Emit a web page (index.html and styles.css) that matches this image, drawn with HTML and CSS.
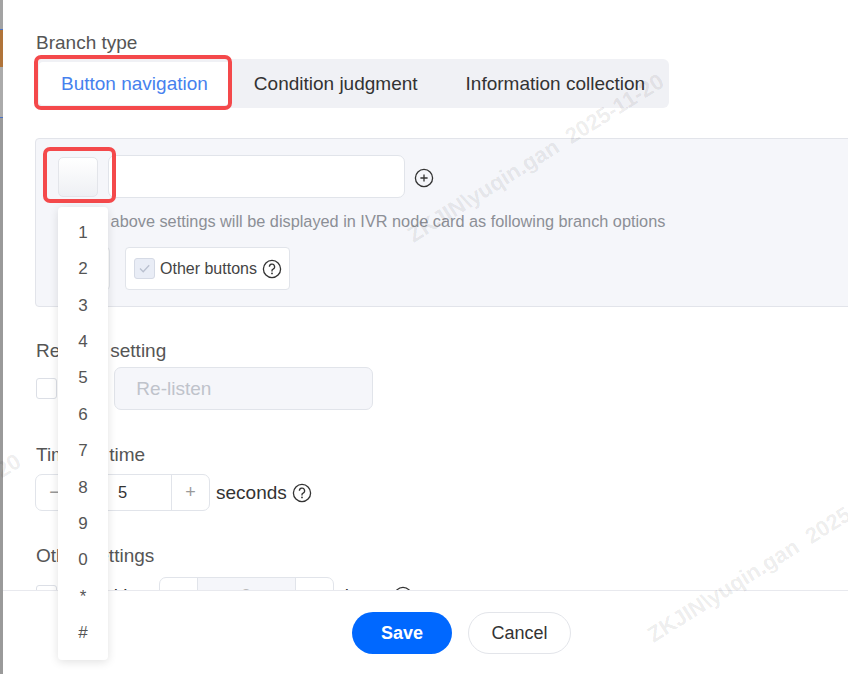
FILE: index.html
```html
<!DOCTYPE html>
<html>
<head>
<meta charset="utf-8">
<link rel="stylesheet" href="styles.css">
</head>
<body>
<div class="page">
  <div class="strip"></div>
  <div class="modal">
    <div class="content">
      <div class="label">Branch type</div>
      <div class="segmented">
        <div class="tab active">Button navigation</div>
        <div class="tab">Condition judgment</div>
        <div class="tab">Information collection</div>
      </div>

      <div class="panel">
        <div class="key-row">
          <div class="key-box"></div>
          <div class="text-input"></div>
          <svg class="icon-plus" width="20" height="20" viewBox="0 0 20 20"><circle cx="10" cy="10" r="8.6" fill="none" stroke="#333" stroke-width="1.3"/><path d="M10 6.4v7.2M6.4 10h7.2" stroke="#333" stroke-width="1.3"/></svg>
        </div>
        <div class="hint">The above settings will be displayed in IVR node card as following branch options</div>
        <div class="chip-row">
          <div class="chip chip-hidden"></div>
          <div class="chip">
            <span class="checkbox checked-disabled"><svg width="21" height="21" viewBox="0 0 21 21"><path d="M6 10.5l3.2 3.2 6-6.4" fill="none" stroke="#b9c0cf" stroke-width="1.3"/></svg></span>
            <span class="chip-text">Other buttons</span>
            <svg class="icon-help" width="20" height="20" viewBox="0 0 20 20"><circle cx="10" cy="10" r="8.6" fill="none" stroke="#333" stroke-width="1.3"/><path d="M7.4 7.8a2.6 2.6 0 1 1 3.7 2.3c-.7.3-1.1.8-1.1 1.5v.8" fill="none" stroke="#333" stroke-width="1.3"/><circle cx="10" cy="14.4" r=".9" fill="#333"/></svg>
          </div>
        </div>
      </div>

      <div class="label section">Re-<span class="tight">listen</span> setting</div>
      <div class="row relisten-row">
        <span class="checkbox"></span>
        <span class="row-text">On</span>
        <div class="disabled-input">Re-listen</div>
      </div>

      <div class="label section">Timeout time</div>
      <div class="row timeout-row">
        <div class="stepper">
          <span class="step">−</span>
          <span class="step-value">5</span>
          <span class="step">+</span>
        </div>
        <span class="row-text after">seconds</span>
        <svg class="icon-help" width="20" height="20" viewBox="0 0 20 20"><circle cx="10" cy="10" r="8.6" fill="none" stroke="#333" stroke-width="1.3"/><path d="M7.4 7.8a2.6 2.6 0 1 1 3.7 2.3c-.7.3-1.1.8-1.1 1.5v.8" fill="none" stroke="#333" stroke-width="1.3"/><circle cx="10" cy="14.4" r=".9" fill="#333"/></svg>
      </div>

      <div class="label section">Other settings</div>
      <div class="row other-row">
        <span class="checkbox"></span>
        <span class="row-text">Repetition</span>
        <div class="stepper stepper-disabled">
          <span class="step">−</span>
          <span class="step-value">3</span>
          <span class="step">+</span>
        </div>
        <span class="row-text after">times</span>
        <svg class="icon-help" width="20" height="20" viewBox="0 0 20 20"><circle cx="10" cy="10" r="8.6" fill="none" stroke="#333" stroke-width="1.3"/><path d="M7.4 7.8a2.6 2.6 0 1 1 3.7 2.3c-.7.3-1.1.8-1.1 1.5v.8" fill="none" stroke="#333" stroke-width="1.3"/><circle cx="10" cy="14.4" r=".9" fill="#333"/></svg>
      </div>
    </div>

    <div class="footer">
      <button class="btn btn-primary">Save</button>
      <button class="btn btn-default">Cancel</button>
    </div>

    <div class="watermark wm1">ZKJIN\yuqin.gan&nbsp;&nbsp;2025-11-20</div>
    <div class="watermark wm2">ZKJIN\yuqin.gan&nbsp;&nbsp;2025-11-20</div>
    <div class="watermark wm3">ZKJIN\yuqin.gan&nbsp;&nbsp;2025-11-20</div>

    <div class="annot annot-tab"></div>
    <div class="annot annot-key"></div>

    <div class="dropdown">
      <div class="dd-item">1</div>
      <div class="dd-item">2</div>
      <div class="dd-item">3</div>
      <div class="dd-item">4</div>
      <div class="dd-item">5</div>
      <div class="dd-item">6</div>
      <div class="dd-item">7</div>
      <div class="dd-item">8</div>
      <div class="dd-item">9</div>
      <div class="dd-item">0</div>
      <div class="dd-item">*</div>
      <div class="dd-item">#</div>
    </div>
  </div>
</div>
</body>
</html>
```

FILE: styles.css
```css
html, body {
  margin: 0;
  padding: 0;
  background: #fff;
  overflow: hidden;
}
body {
  font-family: "Liberation Sans", Arial, sans-serif;
  color: #333;
}
.page {
  display: flex;
  width: 848px;
  height: 674px;
  overflow: hidden;
}
.strip {
  flex: none;
  width: 3px;
  height: 674px;
  background: linear-gradient(to bottom,
    #a3a3a3 0, #a3a3a3 29px,
    #4a72c4 29px, #4a72c4 30px,
    #b0743a 30px, #b0743a 67px,
    #ababab 67px, #ababab 117px,
    #4a72c4 117px, #4a72c4 118px,
    #9a9a9a 118px, #9a9a9a 100%);
}
.modal {
  flex: none;
  width: 917px;
  height: 674px;
  display: flex;
  flex-direction: column;
  background: #fff;
  position: relative;
}
.content {
  height: 590px;
  box-sizing: border-box;
  padding: 31px 33px 0 33px;
  overflow: hidden;
  flex: none;
}
.label {
  font-size: 19px;
  line-height: 24px;
  color: #555;
}
.label.section {
  margin-top: 32px;
}
.tight {
  letter-spacing: -1px;
}
.segmented {
  margin-top: 4px;
  display: flex;
  width: fit-content;
  background: #f0f1f5;
  border-radius: 6px;
  padding: 3px;
}
.tab {
  height: 43px;
  line-height: 43px;
  padding: 0 24px;
  font-size: 19px;
  color: #333;
  border-radius: 4px;
}
.tab:last-child {
  padding-right: 21px;
}
.tab.active {
  padding: 0 22px;
  background: #fff;
  color: #4781ee;
}
.panel {
  margin: 30px -60px 0 -1px;
  background: #f5f6fa;
  border: 1px solid #e2e4ea;
  border-radius: 4px;
  padding: 16px 0 16px 22px;
}
.key-row {
  display: flex;
  align-items: center;
  height: 43px;
}
.key-box {
  width: 40px;
  height: 40px;
  box-sizing: border-box;
  border: 1px solid #e3e5ea;
  border-radius: 5px;
  background: linear-gradient(#ffffff, #eef0f4);
  margin-right: 10px;
}
.text-input {
  width: 297px;
  height: 43px;
  box-sizing: border-box;
  border: 1px solid #e1e4ea;
  border-radius: 7px;
  background: #fff;
}
.icon-plus {
  margin-left: 9px;
  margin-top: 2px;
}
.hint {
  margin-top: 12px;
  padding-left: 20px;
  font-size: 16.3px;
  line-height: 22px;
  color: #8c8f96;
}
.chip-row {
  margin-top: 15px;
  display: flex;
  gap: 15px;
}
.chip {
  height: 43px;
  box-sizing: border-box;
  border: 1px solid #e1e4ea;
  border-radius: 4px;
  background: #fff;
  display: flex;
  align-items: center;
  padding: 0 7px 0 8px;
}
.chip-hidden {
  width: 52px;
}
.checkbox {
  width: 21px;
  height: 21px;
  box-sizing: border-box;
  border: 1px solid #dcdfe6;
  border-radius: 3px;
  background: #fff;
  flex: none;
  display: block;
}
.checkbox.checked-disabled {
  background: #e9edf6;
  border-color: #d5dae5;
}
.checkbox svg {
  display: block;
  margin: -1px;
}
.chip-text {
  margin-left: 5px;
  font-size: 16px;
  color: #444;
}
.icon-help {
  margin-left: 5px;
  flex: none;
}
.row {
  display: flex;
  align-items: center;
}
.relisten-row {
  margin-top: 4px;
  height: 43px;
}
.row-text {
  margin-left: 6px;
  font-size: 19px;
  color: #333;
}
.disabled-input {
  width: 259px;
  height: 43px;
  box-sizing: border-box;
  border: 1px solid #e1e4ea;
  border-radius: 7px;
  background: #f5f6fa;
  color: #bfc3cb;
  font-size: 19px;
  line-height: 41px;
  padding-left: 21px;
}
.relisten-row .disabled-input {
  margin-left: 26px;
}
.row + .label.section {
  margin-top: 33px;
}
.timeout-row {
  margin-top: 7px;
}
.stepper {
  display: flex;
  width: 175px;
  height: 37px;
  box-sizing: border-box;
  border: 1px solid #e1e4ea;
  border-radius: 7px;
  overflow: hidden;
  margin-left: -1px;
}
.step {
  width: 37px;
  flex: none;
  text-align: center;
  line-height: 35px;
  font-size: 18px;
  color: #999;
}
.step-value {
  flex: 1;
  text-align: center;
  line-height: 35px;
  font-size: 16.5px;
  color: #333;
  border-left: 1px solid #e1e4ea;
  border-right: 1px solid #e1e4ea;
}
.other-row {
  margin-top: 9px;
}
.other-row .stepper {
  margin-left: 10px;
}
.other-row .icon-help {
  margin-left: 8px;
}
.stepper-disabled .step-value {
  background: #f5f6fa;
  color: #bbb;
}
.footer {
  flex: none;
  border-top: 1px solid #e8e9ee;
  display: flex;
  justify-content: center;
  gap: 16px;
  padding-top: 21px;
}
.btn {
  height: 42px;
  border-radius: 21px;
  font-family: "Liberation Sans", Arial, sans-serif;
  font-size: 18px;
  padding: 0;
  cursor: pointer;
}
.btn-primary {
  width: 100px;
  background: #0068ff;
  border: none;
  color: #fff;
  font-weight: bold;
}
.btn-default {
  width: 103px;
  background: #fff;
  border: 1px solid #e3e5ea;
  color: #333;
}
.watermark {
  position: absolute;
  white-space: pre;
  font-size: 22px;
  font-weight: bold;
  color: rgba(0, 0, 0, 0.085);
  transform-origin: 0 0;
  transform: rotate(-32deg);
  pointer-events: none;
}
.wm1 { left: 400px; top: 226px; }
.wm2 { left: 640px; top: 626px; }
.wm3 { left: -243px; top: 606px; }
.annot {
  position: absolute;
  border: 4px solid #f4494b;
  border-radius: 7px;
  box-sizing: border-box;
}
.annot-tab {
  left: 31px;
  top: 55px;
  width: 198px;
  height: 55px;
}
.annot-key {
  left: 40px;
  top: 147px;
  width: 73px;
  height: 56px;
}
.dropdown {
  position: absolute;
  left: 55px;
  top: 207px;
  width: 50px;
  box-sizing: border-box;
  padding: 8px 0 9px;
  background: #fff;
  border-radius: 4px;
  box-shadow: 0 2px 10px rgba(0, 0, 0, 0.12);
}
.dd-item {
  height: 36.36px;
  line-height: 36.36px;
  text-align: center;
  font-size: 17px;
  color: #555;
}
```
